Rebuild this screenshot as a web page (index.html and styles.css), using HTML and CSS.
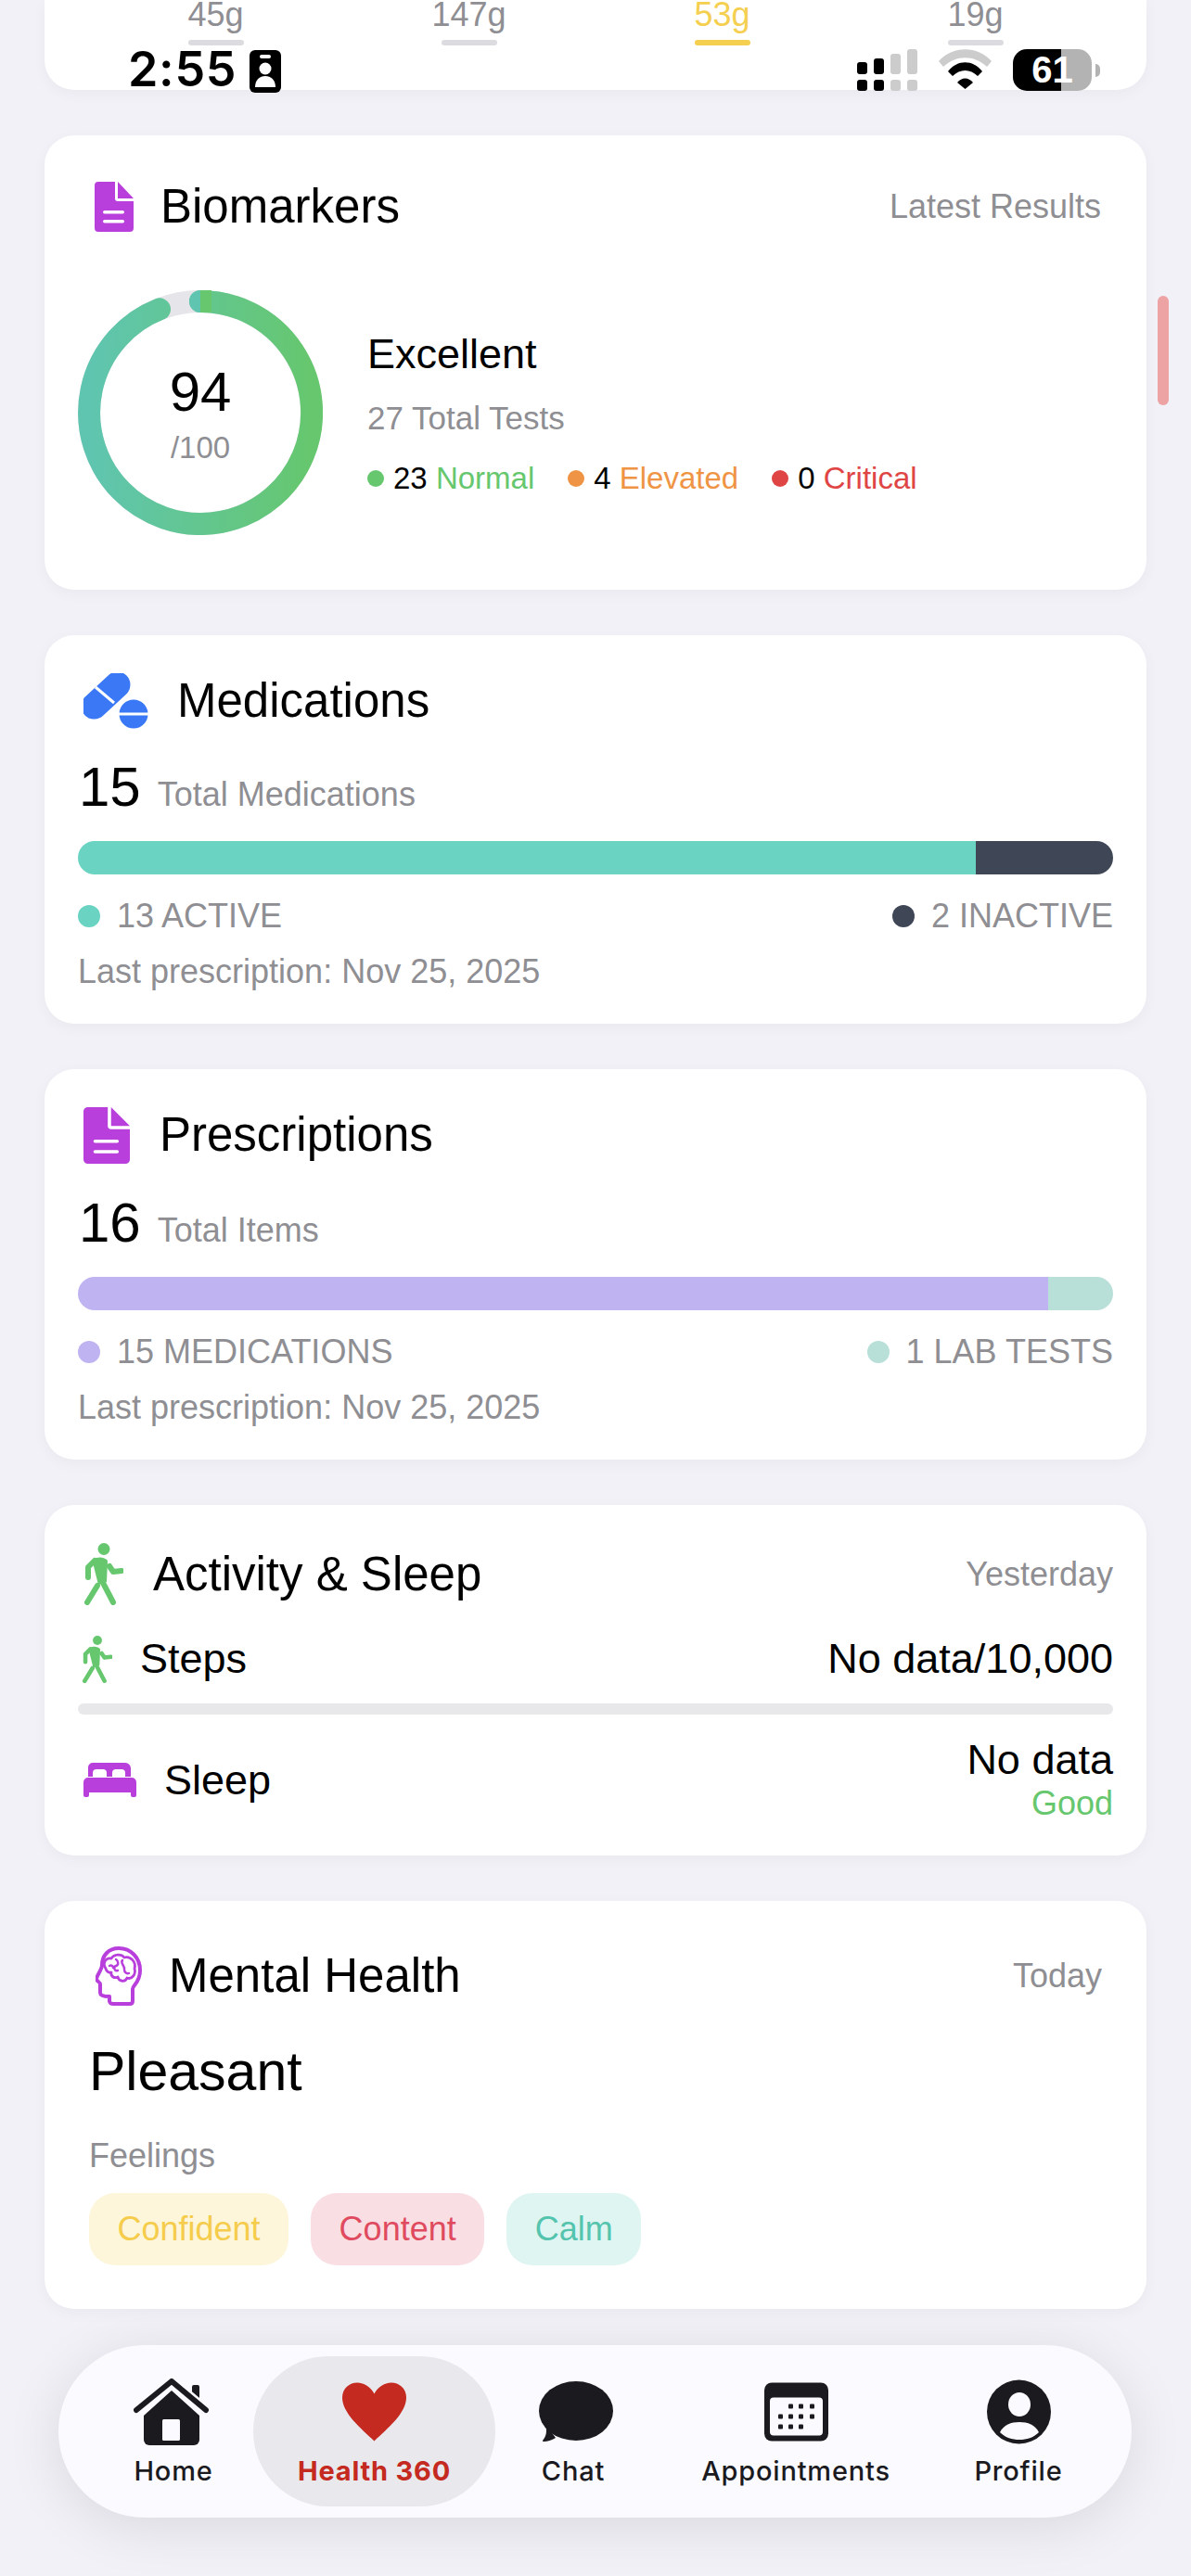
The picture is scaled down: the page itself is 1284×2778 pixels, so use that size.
FILE: index.html
```html
<!DOCTYPE html>
<html lang="en">
<head>
    <meta charset="UTF-8">
    <meta name="viewport" content="width=device-width, initial-scale=1.0">
    <title>Health 360</title>
    <link rel="stylesheet" href="styles.css">
</head>
<body>
    <!-- status bar sits over the scrolled content -->
    <div class="status-bar">
        <div class="status-left">
            <span class="clock">2:55</span>
            <svg class="id-icon" width="34" height="46" viewBox="0 0 34 46">
                <rect width="34" height="46" rx="6" fill="#000"/>
                <rect x="11" y="5" width="12" height="4" rx="2" fill="#fff"/>
                <circle cx="17" cy="20" r="6.500" fill="#fff"/>
                <path d="M6 40c0-8 5-12 11-12s11 4 11 12z" fill="#fff"/>
            </svg>
        </div>
        <div class="status-right">
            <svg class="signal" width="65" height="45" viewBox="0 0 65 45">
                <rect x="0" y="14" width="11" height="13" rx="3" fill="#000"/>
                <rect x="18" y="10" width="11" height="17" rx="3" fill="#000"/>
                <rect x="36" y="5" width="11" height="22" rx="3" fill="#ccc"/>
                <rect x="54" y="0" width="11" height="27" rx="3" fill="#ccc"/>
                <rect x="0" y="33" width="11" height="12" rx="3" fill="#000"/>
                <rect x="18" y="33" width="11" height="12" rx="3" fill="#000"/>
                <rect x="36" y="33" width="11" height="12" rx="3" fill="#ccc"/>
                <rect x="54" y="33" width="11" height="12" rx="3" fill="#ccc"/>
            </svg>
            <svg class="wifi" width="57" height="43" viewBox="0 0 57 43">
                <path d="M0 13C15-4 42-4 57 13l-5 6C38 6 19 6 5 19z" fill="#ccc"/>
                <path d="M10 24C20 11 37 11 47 24l-5 5C34 21 23 21 15 29z" fill="#000"/>
                <path d="M20 36c5-6 12-6 17 0l-8.500 7z" fill="#000"/>
            </svg>
            <div class="battery">61</div>
            <div class="battery-cap"></div>
        </div>
    </div>

    <div class="page">
        <div class="macros">
            <div class="macro"><span>45g</span><i></i></div>
            <div class="macro"><span>147g</span><i></i></div>
            <div class="macro macro-active"><span>53g</span><i></i></div>
            <div class="macro"><span>19g</span><i></i></div>
        </div>

        <div class="card">
            <div class="card-head head-bio">
                <svg class="doc-icon" width="42" height="54" viewBox="0 0 42 54">
                    <path d="M4 0h18v18a3 3 0 0 0 3 3h17v29a4 4 0 0 1-4 4H4a4 4 0 0 1-4-4V4a4 4 0 0 1 4-4z" fill="#b93fdc"/>
                    <path d="M25 0l17 18H25z" fill="#b93fdc"/>
                    <rect x="9" y="31" width="23" height="3.500" rx="1.700" fill="#fff"/>
                    <rect x="9" y="41" width="23" height="3.500" rx="1.700" fill="#fff"/>
                </svg>
                <h2 class="card-title">Biomarkers</h2>
                <span class="head-note">Latest Results</span>
            </div>
            <div class="bio-body">
                <div class="ring">
                    <svg width="264" height="264" viewBox="0 0 264 264">
                        <defs>
                            <linearGradient id="ringGrad" x1="0" y1="0" x2="1" y2="0">
                                <stop offset="0" stop-color="#5fc5b0"/>
                                <stop offset="1" stop-color="#66c76e"/>
                            </linearGradient>
                        </defs>
                        <circle cx="132" cy="132" r="120" fill="none" stroke="#e5e5ea" stroke-width="24"/>
                        <path d="M132 12A120 120 0 1 1 88 20.400" fill="none" stroke="url(#ringGrad)" stroke-width="24" stroke-linecap="round"/>
                        <path d="M132 0a12 12 0 0 0 0 24z" fill="#5fc5b0"/>
                        <rect x="132" y="0" width="12" height="24" fill="#66c76e"/>
                    </svg>
                    <div class="ring-text">
                        <div class="ring-score">94</div>
                        <div class="ring-max">/100</div>
                    </div>
                </div>
                <div class="bio-info">
                    <div class="bio-status">Excellent</div>
                    <div class="bio-total">27 Total Tests</div>
                    <div class="bio-legend">
                        <span class="bio-item"><b class="dot-s green-bg"></b>23 <em class="green">Normal</em></span>
                        <span class="bio-item"><b class="dot-s orange-bg"></b>4 <em class="orange">Elevated</em></span>
                        <span class="bio-item"><b class="dot-s red-bg"></b>0 <em class="red">Critical</em></span>
                    </div>
                </div>
            </div>
        </div>

        <div class="card">
            <div class="card-head head-med">
                <svg class="pill-icon" width="70" height="60" viewBox="0 0 70 60">
                    <rect x="-7" y="10" width="62" height="28" rx="14" fill="#3b78f5" transform="rotate(-43 24 24)"/>
                    <path d="M13 15l20 17" stroke="#fff" stroke-width="3"/>
                    <circle cx="54" cy="44" r="15.500" fill="#3b78f5"/>
                    <rect x="37" y="42.500" width="34" height="3" fill="#fff"/>
                </svg>
                <h2 class="card-title">Medications</h2>
            </div>
            <div class="count-row"><span class="count">15</span><span class="count-label">Total Medications</span></div>
            <div class="split-bar">
                <div class="seg teal-bg" style="width: 86.700%"></div>
                <div class="seg slate-bg"></div>
            </div>
            <div class="legend">
                <span class="legend-item"><b class="dot teal-bg"></b>13 ACTIVE</span>
                <span class="legend-item"><b class="dot slate-bg"></b>2 INACTIVE</span>
            </div>
            <div class="last-line">Last prescription: Nov 25, 2025</div>
        </div>

        <div class="card">
            <div class="card-head head-pres">
                <svg class="doc-icon" width="50" height="61" viewBox="0 0 42 54" preserveAspectRatio="none">
                    <path d="M4 0h18v18a3 3 0 0 0 3 3h17v29a4 4 0 0 1-4 4H4a4 4 0 0 1-4-4V4a4 4 0 0 1 4-4z" fill="#b93fdc"/>
                    <path d="M25 0l17 18H25z" fill="#b93fdc"/>
                    <rect x="9" y="31" width="23" height="3" rx="1.500" fill="#fff"/>
                    <rect x="9" y="41" width="23" height="3" rx="1.500" fill="#fff"/>
                </svg>
                <h2 class="card-title">Prescriptions</h2>
            </div>
            <div class="count-row"><span class="count">16</span><span class="count-label">Total Items</span></div>
            <div class="split-bar">
                <div class="seg lilac-bg" style="width: 93.750%"></div>
                <div class="seg mint-bg"></div>
            </div>
            <div class="legend">
                <span class="legend-item"><b class="dot lilac-bg"></b>15 MEDICATIONS</span>
                <span class="legend-item"><b class="dot mint-bg"></b>1 LAB TESTS</span>
            </div>
            <div class="last-line">Last prescription: Nov 25, 2025</div>
        </div>

        <div class="card">
            <div class="card-head head-act">
                <svg class="walk-icon" width="42" height="67" viewBox="0 0 42 67">
                    <circle cx="21" cy="6.500" r="6.500" fill="#66c76e"/>
                    <path d="M9 18c5-4 13-3 16 1l-1 23-9 3-5-20z" fill="#66c76e"/>
                    <path d="M11 19L4 26v11M27 25l4 6 9-1M19 41l12 23M14 46L3 64" fill="none" stroke="#66c76e" stroke-width="6" stroke-linecap="round" stroke-linejoin="round"/>
                </svg>
                <h2 class="card-title">Activity &amp; Sleep</h2>
                <span class="head-note">Yesterday</span>
            </div>
            <div class="stat-row steps-row">
                <div class="stat-left">
                    <svg class="walk-icon-s" width="32" height="51" viewBox="0 0 42 67">
                        <circle cx="21" cy="6.500" r="6.500" fill="#66c76e"/>
                        <path d="M9 18c5-4 13-3 16 1l-1 23-9 3-5-20z" fill="#66c76e"/>
                        <path d="M11 19L4 26v11M27 25l4 6 9-1M19 41l12 23M14 46L3 64" fill="none" stroke="#66c76e" stroke-width="6" stroke-linecap="round" stroke-linejoin="round"/>
                    </svg>
                    <span>Steps</span>
                </div>
                <span>No data/10,000</span>
            </div>
            <div class="steps-bar"></div>
            <div class="stat-row sleep-row">
                <div class="stat-left">
                    <svg class="bed-icon" width="57" height="37" viewBox="0 0 57 37">
                        <path d="M10 0h35a6 6 0 0 1 6 6v9h-6V11a4 4 0 0 0-4-4H35a4 4 0 0 0-4 4v4h-6V11a4 4 0 0 0-4-4H14a4 4 0 0 0-4 4v4H5V5a5 5 0 0 1 5-5z" fill="#b93fdc"/>
                        <path d="M5 16h47a5 5 0 0 1 5 5v14a2 2 0 0 1-2 2h-2a2 2 0 0 1-2-2v-3H6v3a2 2 0 0 1-2 2H2a2 2 0 0 1-2-2V21a5 5 0 0 1 5-5z" fill="#b93fdc"/>
                    </svg>
                    <span>Sleep</span>
                </div>
                <div class="sleep-values">
                    <div class="sleep-value">No data</div>
                    <div class="sleep-quality">Good</div>
                </div>
            </div>
        </div>

        <div class="card card-mental">
            <div class="card-head head-mental">
                <svg class="brain-icon" width="50" height="64" viewBox="8 3 50 64">
                    <path d="M33 5C22 5 15 13 15 23c0 5-6 12-6 15 0 3 4 3 4 6v9c0 3 4 4 10 4v5c0 2 2 3 4 3h18c2 0 3-1 3-3V49c0-4 8-7 8-20C56 15 46 5 33 5z" fill="none" stroke="#b93fdc" stroke-width="4" stroke-linejoin="round"/>
                    <path d="M19 27c-4-6 0-12 6-11 3-5 11-5 14-1 7-2 13 5 11 12 2 6-3 12-8 10-2 5-9 4-10-1-4 2-8-1-7-5-3 1-5-1-6-4z" fill="none" stroke="#b93fdc" stroke-width="2.800" stroke-linejoin="round"/>
                    <path d="M30 17c3 2 3 6 0 7-3 1-2 6 2 5M37 18c-3 3 3 6 2 10 0 3 3 5 5 4M23 24c2-1 4 0 4 2" fill="none" stroke="#b93fdc" stroke-width="2.500" stroke-linecap="round"/>
                </svg>
                <h2 class="card-title">Mental Health</h2>
                <span class="head-note">Today</span>
            </div>
            <div class="mood">Pleasant</div>
            <div class="feelings-label">Feelings</div>
            <div class="chips">
                <span class="chip chip-yellow">Confident</span>
                <span class="chip chip-pink">Content</span>
                <span class="chip chip-teal">Calm</span>
            </div>
        </div>
    </div>

    <div class="scroll-thumb"></div>

    <nav class="tab-bar">
        <div class="tab tab-home">
            <svg width="81" height="72" viewBox="0 0 81 72">
                <rect x="63" y="7" width="8" height="20" rx="2" fill="#1a1a1f"/>
                <path d="M41 13l30 27v26a6 6 0 0 1-6 6H17a6 6 0 0 1-6-6V40z" fill="#1a1a1f"/>
                <rect x="31" y="44" width="19" height="23" rx="1.500" fill="#fafaff"/>
                <path d="M3 34L41 3l37 31" fill="none" stroke="#fafaff" stroke-width="11" stroke-linejoin="round"/>
                <path d="M3 34L41 3l37 31" fill="none" stroke="#1a1a1f" stroke-width="6" stroke-linecap="round" stroke-linejoin="round"/>
            </svg>
            <span>Home</span>
        </div>
        <div class="tab tab-active">
            <svg width="69" height="63" viewBox="0 0 69 63">
                <path d="M34.500 63C20 49 0 33 0 16 0 6 8 0 16 0c8 0 15 5 18.500 12C38 5 45 0 53 0c8 0 16 6 16 16 0 17-20 33-34.500 47z" fill="#c52a20"/>
            </svg>
            <span>Health 360</span>
        </div>
        <div class="tab tab-chat">
            <svg width="80" height="66" viewBox="0 0 80 66">
                <ellipse cx="40" cy="32" rx="40" ry="32" fill="#1a1a1f"/>
                <path d="M7 46c2 8 1 13-3 18-1 2 8 1 14-3z" fill="#1a1a1f"/>
            </svg>
            <span>Chat</span>
        </div>
        <div class="tab">
            <svg width="69" height="63" viewBox="0 0 69 63">
                <rect width="69" height="63" rx="8" fill="#1a1a1f"/>
                <rect x="6" y="16" width="57" height="41" rx="4" fill="#fafaff"/>
                <g fill="#1a1a1f">
                    <rect x="26" y="23" width="5" height="5" rx="1"/><rect x="37" y="23" width="5" height="5" rx="1"/><rect x="49" y="23" width="5" height="5" rx="1"/>
                    <rect x="15" y="34" width="5" height="5" rx="1"/><rect x="26" y="34" width="5" height="5" rx="1"/><rect x="37" y="34" width="5" height="5" rx="1"/><rect x="49" y="34" width="5" height="5" rx="1"/>
                    <rect x="15" y="45" width="5" height="5" rx="1"/><rect x="26" y="45" width="5" height="5" rx="1"/><rect x="37" y="45" width="5" height="5" rx="1"/>
                </g>
            </svg>
            <span>Appointments</span>
        </div>
        <div class="tab">
            <svg width="69" height="70" viewBox="0 0 69 70">
                <circle cx="34.500" cy="35" r="34.500" fill="#1a1a1f"/>
                <ellipse cx="35" cy="27" rx="12" ry="13" fill="#fafaff"/>
                <path d="M14 57c4-8 12-11 21-11s17 3 21 11c-6 6-13 8-21 8s-15-2-21-8z" fill="#fafaff"/>
            </svg>
            <span>Profile</span>
        </div>
    </nav>
</body>
</html>
```

FILE: styles.css
```css
*{
    box-sizing: border-box;
}
html, body{
    margin: 0;
    padding: 0;
    height: 100%;
}
body{
    font-family: "Liberation Sans", Arial, sans-serif;
    background-color: #f1f1f7;
    color: #000;
    overflow: hidden;
    position: relative;
}
.page{
    padding: 0 48px;
}

/* status bar */
.status-bar{
    position: absolute;
    top: 0;
    left: 0;
    width: 100%;
    height: 100px;
    display: flex;
    justify-content: space-between;
    z-index: 5;
}
.status-left{
    display: flex;
    align-items: flex-start;
    padding: 54px 0 0 138px;
    gap: 14px;
}
.clock{
    font-family: Inter, sans-serif;
    font-weight: 600;
    font-size: 52px;
    line-height: 42px;
    letter-spacing: 0.700px;
}
.status-right{
    display: flex;
    align-items: flex-start;
    padding: 53px 0 0 0;
    margin-right: 98px;
}
.signal{
    margin-right: 23px;
}
.wifi{
    margin-right: 23px;
}
.battery{
    width: 85px;
    height: 45px;
    border-radius: 15px;
    background: linear-gradient(to right, #000 61%, #b3b3b3 61%);
    color: #fff;
    font-weight: 700;
    font-size: 40px;
    line-height: 45px;
    text-align: center;
}
.battery-cap{
    width: 5px;
    height: 14px;
    margin: 16px 0 0 4px;
    border-radius: 0 7px 7px 0;
    background-color: #b3b3b3;
}

/* macro strip, scrolled under the status bar */
.macros{
    height: 97px;
    background-color: #fff;
    border-radius: 0 0 32px 32px;
    box-shadow: 0 4px 16px rgba(0, 0, 0, 0.04);
    padding: 0 48px;
    display: grid;
    grid-template-columns: repeat(4, 1fr);
    margin-bottom: 49px;
}
.macro{
    display: flex;
    flex-direction: column;
    align-items: center;
    font-size: 36px;
    line-height: 32px;
    color: #8e8e93;
}
.macro i{
    display: block;
    width: 60px;
    height: 6px;
    border-radius: 3px;
    margin-top: 11px;
    background-color: #dcdce0;
}
.macro-active{
    color: #f5cf50;
}
.macro-active i{
    background-color: #f5cf50;
}

/* cards */
.card{
    background-color: #fff;
    border-radius: 32px;
    box-shadow: 0 4px 16px rgba(0, 0, 0, 0.04);
    padding: 36px 36px 36px;
    margin-bottom: 49px;
}
.card-head{
    display: flex;
    align-items: center;
}
.card-title{
    font-size: 51px;
    font-weight: 400;
    margin: 0;
    line-height: 60px;
}
.head-note{
    margin-left: auto;
    font-size: 36px;
    color: #8e8e93;
}
.head-bio{
    height: 82px;
    padding: 0 13px 0 18px;
}
.head-bio .card-title{
    margin-left: 29px;
}
.head-med{
    height: 70px;
    padding-left: 6px;
}
.head-med .card-title{
    margin-left: 31px;
}
.head-pres{
    height: 72px;
    padding: 0 0 2px 6px;
}
.head-pres .card-title{
    margin-left: 32px;
}
.head-act{
    height: 77px;
    padding-left: 7px;
}
.head-act .card-title{
    margin-left: 32px;
}

/* biomarkers */
.bio-body{
    display: flex;
    align-items: center;
    margin-top: 49px;
    margin-bottom: 23px;
}
.ring{
    position: relative;
    width: 264px;
    height: 264px;
    flex: none;
}
.ring svg{
    display: block;
}
.ring-text{
    position: absolute;
    top: 0;
    left: 0;
    width: 100%;
    height: 100%;
    padding-top: 2px;
    display: flex;
    flex-direction: column;
    align-items: center;
    justify-content: center;
}
.ring-score{
    font-size: 60px;
    line-height: 66px;
}
.ring-max{
    font-size: 33px;
    line-height: 40px;
    margin-top: 7px;
    color: #8e8e93;
}
.bio-info{
    margin-left: 48px;
}
.bio-status{
    font-size: 45px;
    line-height: 50px;
}
.bio-total{
    font-size: 35px;
    line-height: 40px;
    margin-top: 24px;
    color: #8e8e93;
}
.bio-legend{
    display: flex;
    gap: 36px;
    font-size: 33px;
    line-height: 36px;
    margin-top: 27px;
}
.bio-item{
    display: flex;
    align-items: center;
    white-space: pre;
}
.bio-item em{
    font-style: normal;
}
.dot-s{
    width: 18px;
    height: 18px;
    border-radius: 50%;
    margin-right: 10px;
}
.green{ color: #66c76e; }
.orange{ color: #ef9444; }
.red{ color: #e04545; }
.green-bg{ background-color: #66c76e; }
.orange-bg{ background-color: #ef9444; }
.red-bg{ background-color: #e04545; }

/* medication + prescription summaries */
.count-row{
    display: flex;
    align-items: baseline;
    height: 60px;
    margin-top: 28px;
    line-height: 60px;
}
.count{
    font-size: 60px;
    margin-left: 1px;
}
.count-label{
    font-size: 36px;
    color: #8e8e93;
    margin-left: 18px;
}
.split-bar{
    display: flex;
    height: 36px;
    margin-top: 28px;
    border-radius: 18px;
    overflow: hidden;
}
.seg{
    flex: none;
}
.seg:last-child{
    flex: 1;
}
.teal-bg{ background-color: #6ad3c2; }
.slate-bg{ background-color: #3f4756; }
.lilac-bg{ background-color: #c0b3f2; }
.mint-bg{ background-color: #b8e0d8; }
.legend{
    display: flex;
    justify-content: space-between;
    margin-top: 25px;
    font-size: 36px;
    line-height: 40px;
    color: #8e8e93;
}
.legend-item{
    display: flex;
    align-items: center;
}
.dot{
    width: 24px;
    height: 24px;
    border-radius: 50%;
    margin-right: 18px;
}
.last-line{
    margin-top: 20px;
    font-size: 36px;
    line-height: 40px;
    color: #8e8e93;
}

/* activity + sleep */
.stat-row{
    display: flex;
    justify-content: space-between;
    align-items: center;
    font-size: 45px;
    line-height: 48px;
}
.stat-left{
    display: flex;
    align-items: center;
}
.steps-row{
    height: 56px;
    margin-top: 25px;
}
.walk-icon-s{
    margin-left: 5px;
    margin-right: 30px;
}
.steps-bar{
    height: 12px;
    margin-top: 20px;
    border-radius: 6px;
    background-color: #e8e8ea;
}
.sleep-row{
    margin-top: 25px;
}
.bed-icon{
    margin-left: 6px;
    margin-right: 30px;
}
.sleep-values{
    text-align: right;
}
.sleep-quality{
    font-size: 36px;
    line-height: 40px;
    margin-top: 3px;
    color: #66c76e;
}

/* mental health */
.card-mental{
    padding: 36px 48px 47px;
}
.head-mental{
    height: 90px;
    padding-left: 7px;
}
.head-mental .card-title{
    margin-left: 29px;
}
.mood{
    font-size: 59px;
    line-height: 64px;
    margin-top: 26px;
}
.feelings-label{
    font-size: 36px;
    line-height: 40px;
    margin-top: 39px;
    color: #8e8e93;
}
.chips{
    display: flex;
    gap: 24px;
    margin-top: 20px;
}
.chip{
    height: 78px;
    padding: 0 30.500px;
    border-radius: 28px;
    font-size: 36px;
    line-height: 78px;
}
.chip-yellow{ background-color: #fdf6da; color: #f5cc4b; }
.chip-pink{ background-color: #f9dfe4; color: #e04a5f; }
.chip-teal{ background-color: #dff5f1; color: #55c4ae; }

/* overlays */
.scroll-thumb{
    position: absolute;
    top: 319px;
    right: 24px;
    width: 12px;
    height: 118px;
    border-radius: 6px;
    background-color: #eda3a3;
}
.tab-bar{
    position: absolute;
    left: 63px;
    top: 2529px;
    width: 1157px;
    height: 186px;
    padding: 12px 38px;
    border-radius: 93px;
    background-color: #fafaff;
    box-shadow: 0 10px 60px rgba(0, 0, 0, 0.1);
    display: grid;
    grid-template-columns: 172px 261px 168px 312px 168px;
    z-index: 4;
}
.tab{
    display: flex;
    flex-direction: column;
    align-items: center;
    font-family: Inter, sans-serif;
    font-weight: 500;
    font-size: 29px;
    line-height: 36px;
    letter-spacing: 0.800px;
    color: #1a1a1f;
    white-space: nowrap;
}
.tab svg{
    display: block;
    margin-top: 24px;
    height: 72px;
}
.tab span{
    margin-top: 10px;
}
.tab-home svg{
    margin-left: -6px;
}
.tab-chat svg{
    margin-left: 6px;
}
.tab-active{
    border-radius: 81px;
    background-color: #e8e8ed;
    color: #c52a20;
    font-weight: 700;
}
```
